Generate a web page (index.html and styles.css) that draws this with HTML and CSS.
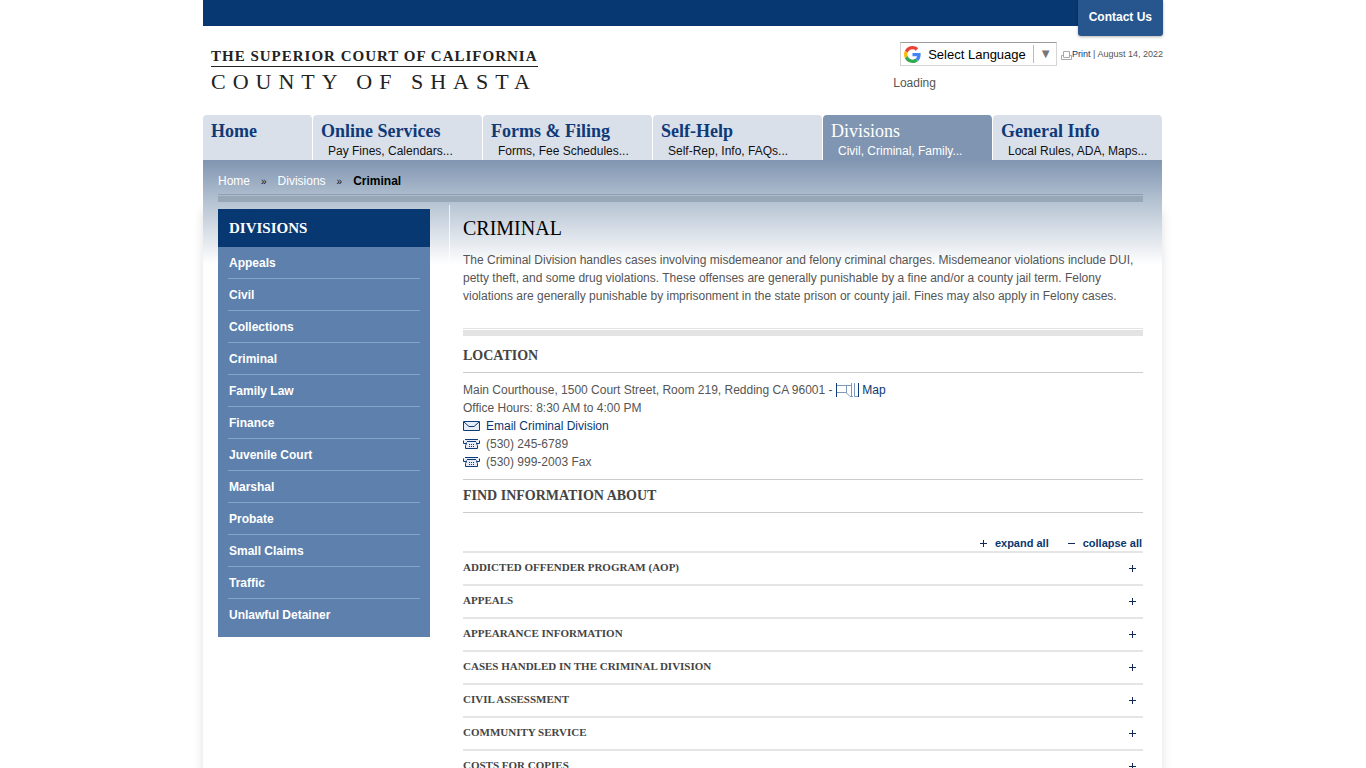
FILE: index.html
```html
<!DOCTYPE html>
<html lang="en">
<head>
    <meta charset="UTF-8">
    <meta name="viewport" content="width=device-width, initial-scale=1.0">
    <title>Criminal - Superior Court of California, County of Shasta</title>
    <link rel="stylesheet" href="styles.css">
</head>
<body>
    <!-- shared icons -->
    <svg class="sprite" aria-hidden="true">
        <symbol id="icon-phone" viewBox="0 0 17 10">
            <path d="M2.500 .5h12l2 2v2h-2v5h-12v-5h-2v-2z" fill="#e6edf8"/>
            <path d="M2 .5h13M.5 1.500v3h3v-1M16.500 1.500v3h-3v-1M4 2.500h9M3.500 4.500l-1 2v3h12v-3l-1-2" fill="none" stroke="#0f3a78"/>
            <path d="M6 5.500h1m1 0h1m1 0h1M6 7.500h1m1 0h1m1 0h1" stroke="#0f3a78"/>
        </symbol>
        <symbol id="icon-plus" viewBox="0 0 7 7">
            <path d="M0 3.500h7M3.500 0v7" stroke="#10285a"/>
        </symbol>
        <symbol id="icon-minus" viewBox="0 0 7 7">
            <path d="M0 3.500h7" stroke="#10285a"/>
        </symbol>
    </svg>

    <div class="wrapper">
        <div class="top-bar">
            <a href="#" class="contact">Contact Us</a>
        </div>

        <header class="header">
            <a href="#" class="logo">
                <span class="logo-top">THE SUPERIOR COURT OF CALIFORNIA</span>
                <span class="logo-bottom">COUNTY OF SHASTA</span>
            </a>
            <div class="tools">
                <div class="tools-row">
                    <div class="translate">
                        <svg class="google" viewBox="0 0 48 48" aria-hidden="true">
                            <path fill="#ea4335" d="M24 9.500c3.540 0 6.710 1.220 9.210 3.600l6.850-6.850C35.900 2.380 30.470 0 24 0 14.620 0 6.510 5.380 2.560 13.220l7.980 6.190C12.430 13.720 17.740 9.500 24 9.500z"/>
                            <path fill="#4285f4" d="M46.980 24.550c0-1.570-.15-3.090-.38-4.550H24v9.020h12.940c-.58 2.960-2.260 5.480-4.780 7.180l7.730 6c4.510-4.180 7.090-10.360 7.090-17.650z"/>
                            <path fill="#fbbc05" d="M10.530 28.590A14.500 14.500 0 0 1 9.770 24c0-1.600.27-3.140.76-4.590l-7.980-6.190A23.900 23.900 0 0 0 0 24c0 3.880.92 7.540 2.560 10.780z"/>
                            <path fill="#34a853" d="M24 48c6.480 0 11.930-2.130 15.890-5.810l-7.730-6c-2.150 1.450-4.920 2.300-8.160 2.300-6.260 0-11.570-4.220-13.470-9.910l-7.980 6.190C6.510 42.620 14.620 48 24 48z"/>
                        </svg>
                        <select aria-label="Language">
                            <option>Select Language</option>
                        </select>
                        <span class="arrow" aria-hidden="true">▼</span>
                    </div>
                    <div class="print">
                        <svg width="11" height="9" viewBox="0 0 11 9" fill="#fff" stroke="#aaa" aria-hidden="true">
                            <path d="M.5 4.500h10v4h-10z"/>
                            <path d="M2.500 .5h6v6h-6z"/>
                        </svg><a href="#">Print</a> | August 14, 2022
                    </div>
                </div>
                <p class="loading">Loading</p>
            </div>
        </header>

        <nav class="main-nav">
            <a href="#"><strong>Home</strong></a>
            <a href="#"><strong>Online Services</strong><span>Pay Fines, Calendars...</span></a>
            <a href="#"><strong>Forms &amp; Filing</strong><span>Forms, Fee Schedules...</span></a>
            <a href="#"><strong>Self-Help</strong><span>Self-Rep, Info, FAQs...</span></a>
            <a href="#" class="active"><strong>Divisions</strong><span>Civil, Criminal, Family...</span></a>
            <a href="#"><strong>General Info</strong><span>Local Rules, ADA, Maps...</span></a>
        </nav>

        <div class="page">
            <div class="breadcrumb">
                <a href="#">Home</a>
                <span>»</span>
                <a href="#">Divisions</a>
                <span>»</span>
                <strong>Criminal</strong>
            </div>

            <div class="columns">
                <aside class="sidebar">
                    <h2>DIVISIONS</h2>
                    <ul>
                        <li><a href="#">Appeals</a></li>
                        <li><a href="#">Civil</a></li>
                        <li><a href="#">Collections</a></li>
                        <li><a href="#">Criminal</a></li>
                        <li><a href="#">Family Law</a></li>
                        <li><a href="#">Finance</a></li>
                        <li><a href="#">Juvenile Court</a></li>
                        <li><a href="#">Marshal</a></li>
                        <li><a href="#">Probate</a></li>
                        <li><a href="#">Small Claims</a></li>
                        <li><a href="#">Traffic</a></li>
                        <li><a href="#">Unlawful Detainer</a></li>
                    </ul>
                </aside>

                <main class="content">
                    <h1>CRIMINAL</h1>
                    <p class="intro">The Criminal Division handles cases involving misdemeanor and felony criminal charges. Misdemeanor violations include DUI, petty theft, and some drug violations. These offenses are generally punishable by a fine and/or a county jail term. Felony violations are generally punishable by imprisonment in the state prison or county jail. Fines may also apply in Felony cases.</p>

                    <h3 class="location-title">LOCATION</h3>
                    <div class="location">
                        <p>Main Courthouse, 1500 Court Street, Room 219, Redding CA 96001 -
                            <a href="#"><svg class="map" width="23" height="14" viewBox="0 0 23 14" fill="none" aria-hidden="true">
                                <path d="M1 2.500h14M1 9.500h9l4 4h3M10.500 2v8M15.500 0v14M18.500 0v13.500h4" stroke="#7f98be"/>
                                <path d="M.5 0v14M22.500 0v14" stroke="#0f3a78"/>
                            </svg> Map</a></p>
                        <p>Office Hours: 8:30 AM to 4:00 PM</p>
                        <p class="contact-line">
                            <svg width="17" height="10" viewBox="0 0 17 10" aria-hidden="true">
                                <path d="M.5 .5h16v9h-16z" fill="#e6edf8" stroke="#0f3a78"/>
                                <path d="M1 1l5 4.500h5l5-4.500" fill="none" stroke="#0f3a78"/>
                            </svg>
                            <a href="#">Email Criminal Division</a>
                        </p>
                        <p class="contact-line"><svg width="17" height="10" aria-hidden="true"><use href="#icon-phone"/></svg>(530) 245-6789</p>
                        <p class="contact-line"><svg width="17" height="10" aria-hidden="true"><use href="#icon-phone"/></svg>(530) 999-2003 Fax</p>
                    </div>

                    <h3 class="find-title">FIND INFORMATION ABOUT</h3>
                    <div class="toggle-all">
                        <button type="button"><svg width="7" height="7"><use href="#icon-plus"/></svg>expand all</button>
                        <button type="button"><svg width="7" height="7"><use href="#icon-minus"/></svg>collapse all</button>
                    </div>
                    <div class="accordion">
                        <button type="button">ADDICTED OFFENDER PROGRAM (AOP)<svg width="7" height="7"><use href="#icon-plus"/></svg></button>
                        <button type="button">APPEALS<svg width="7" height="7"><use href="#icon-plus"/></svg></button>
                        <button type="button">APPEARANCE INFORMATION<svg width="7" height="7"><use href="#icon-plus"/></svg></button>
                        <button type="button">CASES HANDLED IN THE CRIMINAL DIVISION<svg width="7" height="7"><use href="#icon-plus"/></svg></button>
                        <button type="button">CIVIL ASSESSMENT<svg width="7" height="7"><use href="#icon-plus"/></svg></button>
                        <button type="button">COMMUNITY SERVICE<svg width="7" height="7"><use href="#icon-plus"/></svg></button>
                        <button type="button">COSTS FOR COPIES<svg width="7" height="7"><use href="#icon-plus"/></svg></button>
                    </div>
                </main>
            </div>
        </div>
    </div>
</body>
</html>
```
FILE: styles.css
```css
* {
    margin: 0;
    padding: 0;
    box-sizing: border-box;
}

body {
    font-family: Arial, "Liberation Sans", sans-serif;
    font-size: 12px;
    line-height: 18px;
    color: #555;
    background: #fff;
}

a {
    color: #0a3770;
    text-decoration: none;
}

a:hover {
    text-decoration: underline;
}

button {
    border: none;
    background: none;
    cursor: pointer;
}

.sprite {
    display: none;
}

.wrapper {
    max-width: 960px;
    margin: 0 auto;
}

/* header */
.top-bar {
    position: relative;
    height: 26px;
    background: #083872;
}

.contact {
    position: absolute;
    top: 0;
    right: 0;
    padding: 8px 11px 10px;
    background: #27568f;
    color: #fff;
    font-weight: bold;
    border-radius: 0 0 3px 3px;
    box-shadow: 0 1px 3px rgba(0, 0, 0, 0.3);
}

.header {
    display: flex;
    justify-content: space-between;
    min-height: 89px;
}

.logo {
    display: flex;
    flex-direction: column;
    align-self: flex-start;
    margin: 21px 0 0 8px;
    font-family: "Liberation Serif", "Times New Roman", serif;
    color: #222;
}

.logo-top {
    padding-bottom: 1px;
    border-bottom: 1px solid #222;
    font-size: 15px;
    font-weight: bold;
    letter-spacing: 1px;
}

.logo-bottom {
    font-size: 22px;
    line-height: 29px;
    letter-spacing: 7px;
}

.tools {
    padding-top: 16px;
}

.tools-row {
    display: flex;
    align-items: center;
    gap: 4px;
    padding-left: 7px;
}

.translate {
    display: flex;
    align-items: center;
    height: 24px;
    padding: 0 4px 0 3px;
    border: 1px solid #d5d5d5;
    border-top-color: #9b9b9b;
}

.google {
    width: 17px;
    height: 17px;
}

.translate select {
    appearance: none;
    border: none;
    margin-left: 7px;
    padding-right: 7px;
    background: none;
    font-family: inherit;
    font-size: 13px;
    color: #000;
}

.arrow {
    padding-left: 5px;
    border-left: 1px solid #bbb;
    font-size: 13px;
    color: #767676;
}

.print {
    font-size: 9px;
}

.print svg {
    vertical-align: -3px;
}

.loading {
    margin-top: 8px;
}

/* main navigation */
.main-nav {
    display: grid;
    grid-template-columns: 110px repeat(5, 1fr);
}

.main-nav a {
    height: 45px;
    padding: 6px 0 0 8px;
    border-right: 1px solid #fff;
    border-radius: 4px 4px 0 0;
    background: #dae0ea;
    background-clip: padding-box;
}

.main-nav strong {
    display: block;
    padding-bottom: 1px;
    font: bold 18px/20px "Liberation Serif", "Times New Roman", serif;
    color: #0f3a78;
}

.main-nav span {
    display: block;
    padding-left: 7px;
    color: #111;
}

.main-nav .active {
    background-color: #8095b1;
}

.main-nav .active strong {
    font-weight: normal;
    color: #fff;
}

.main-nav .active span {
    color: #fff;
}

/* page body */
.page {
    margin-right: 1px;
    padding: 12px 19px 0 15px;
    background: #fff linear-gradient(#8095b1, #b3c1d1 40px, #fff 105px) no-repeat;
    box-shadow: 0 50px 10px rgba(0, 0, 0, 0.12);
}

.breadcrumb {
    display: flex;
    gap: 11px;
    padding-bottom: 4px;
    border-bottom: 1px solid #8f9fb3;
}

.breadcrumb span {
    font-size: 10px;
    line-height: 20px;
    height: 18px;
    color: #111;
}

.breadcrumb a {
    color: #fff;
}

.breadcrumb strong {
    color: #000;
}

.columns {
    display: grid;
    grid-template-columns: 212px 1fr;
    column-gap: 19px;
    margin-top: 1px;
    padding-top: 3px;
    border-top: 6px solid #98a7b8;
}

.sidebar {
    align-self: start;
    margin-top: 4px;
    padding-bottom: 6px;
    background: #5d80ad;
}

.sidebar h2 {
    padding: 0 11px;
    background: #083872;
    font: bold 15px/38px "Liberation Serif", "Times New Roman", serif;
    color: #fff;
}

.sidebar ul {
    margin: 0 10px;
    list-style: none;
}

.sidebar li {
    border-bottom: 1px solid #83a3c8;
}

.sidebar li:last-child {
    border-bottom-color: transparent;
}

.sidebar a {
    display: block;
    padding: 1px 0 0 1px;
    line-height: 30px;
    font-weight: bold;
    color: #fff;
}

.content {
    padding: 12px 0 0 14px;
    background: linear-gradient(#eef1f5, #fff) no-repeat;
    background-size: 1px 57px;
}

.content h1 {
    font: normal 20px/22px "Liberation Serif", "Times New Roman", serif;
    color: #000;
}

.intro {
    padding: 12px 0 23px;
    border-bottom: 1px solid #e3e3e3;
}

.content h3 {
    font: bold 14px/20px "Liberation Serif", "Times New Roman", serif;
    color: #444;
}

.content .location-title {
    margin-top: 1px;
    padding: 10px 0 6px;
    border-top: 6px solid #e3e3e3;
    border-bottom: 1px solid #ccc;
}

.location {
    padding: 8px 0;
}

.map {
    vertical-align: -3px;
}

.contact-line {
    display: flex;
    align-items: center;
    gap: 6px;
}

.content .find-title {
    padding: 6px 0;
    border-top: 1px solid #ccc;
    border-bottom: 1px solid #ccc;
}

.toggle-all {
    display: flex;
    justify-content: flex-end;
    gap: 19px;
    padding: 22px 1px 0 0;
}

.toggle-all button {
    display: flex;
    align-items: center;
    gap: 8px;
    font: bold 11px/16px Arial, "Liberation Sans", sans-serif;
    color: #0a3770;
}

.toggle-all svg {
    margin-top: 1px;
}

.accordion button {
    display: flex;
    justify-content: space-between;
    align-items: center;
    width: 100%;
    padding: 0 7px 2px 0;
    border-top: 2px solid #e5e5e5;
    font: bold 11px/29px "Liberation Serif", "Times New Roman", serif;
    color: #444;
}

.accordion svg {
    margin-top: 2px;
}
```
